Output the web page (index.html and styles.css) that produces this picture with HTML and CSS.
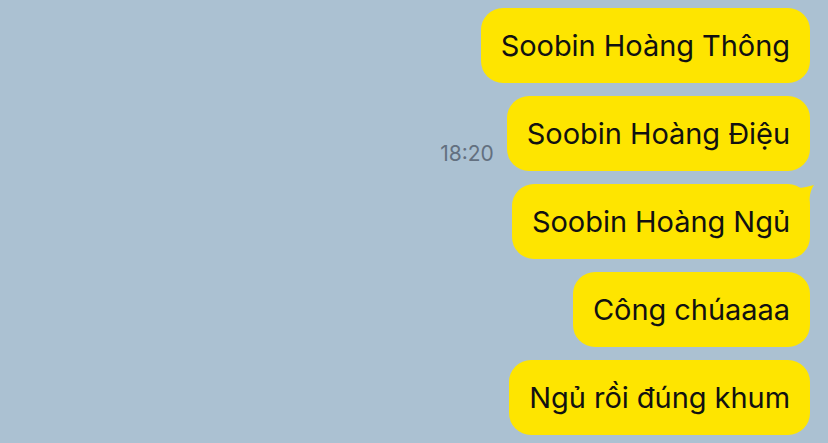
FILE: index.html
```html
<!DOCTYPE html>
<html lang="vi">
<head>
<meta charset="utf-8">
<link rel="stylesheet" href="styles.css">
</head>
<body>
<div class="chat">
  <div class="row"><div class="bubble">Soobin Hoàng Thông</div></div>
  <div class="row"><span class="time">18:20</span><div class="bubble">Soobin Hoàng Điệu</div></div>
  <div class="row"><div class="bubble tail">Soobin Hoàng Ngủ<svg class="tail-svg" width="18" height="22" viewBox="0 0 18 22"><path d="M0 3 C6 3 12 1 17 0 C13 6 12 12 13 22 L0 22 Z" fill="#fee500"/></svg></div></div>
  <div class="row"><div class="bubble">Công chúaaaa</div></div>
  <div class="row"><div class="bubble">Ngủ rồi đúng khum</div></div>
</div>
</body>
</html>
```
FILE: styles.css
```css
* { box-sizing: border-box; }
html, body { margin: 0; padding: 0; }
body {
  width: 828px;
  height: 443px;
  background: #abc1d2;
  overflow: hidden;
  font-family: Inter, "Noto Sans", sans-serif;
}
.chat {
  display: flex;
  flex-direction: column;
  align-items: flex-end;
  gap: 13px;
  padding: 8px 18px 0 0;
}
.row {
  display: flex;
  align-items: flex-end;
  gap: 13px;
}
.bubble {
  position: relative;
  height: 75px;
  display: flex;
  align-items: center;
  padding: 0 20px;
  background: #fee500;
  border-radius: 22px;
  color: #111;
  font-size: 29px;
  letter-spacing: -0.05px;
}
.tail-svg {
  position: absolute;
  right: -5px;
  top: 1px;
}
.time {
  font-size: 21px;
  color: #637080;
  margin-bottom: 5px;
}
```
